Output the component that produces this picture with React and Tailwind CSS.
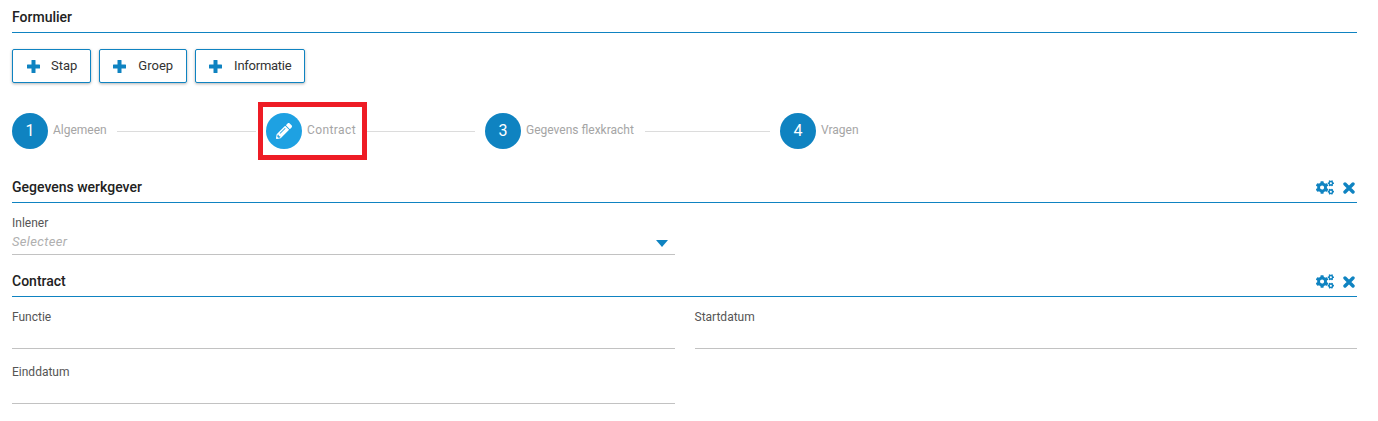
import React from "react";
import { FaPencilAlt, FaCogs } from "react-icons/fa";

const BLUE = "text-[#0f83c1]";

function PlusIcon({ className }) {
  return (
    <svg viewBox="0 0 13 13" className={className} fill="currentColor">
      <rect x="4.5" y="0" width="4" height="13" rx="0.6" />
      <rect x="0" y="4.5" width="13" height="4" rx="0.6" />
    </svg>
  );
}

function CloseIcon({ className }) {
  return (
    <svg viewBox="0 0 12 12" className={className} stroke="currentColor" strokeWidth="3.4" strokeLinecap="round">
      <path d="M2 2 L10 10 M10 2 L2 10" />
    </svg>
  );
}

function AddButton({ label, gap, pad, track = "" }) {
  return (
    <button className={`h-[34px] flex items-center ${pad} bg-white border border-[#0f83c1] rounded-[2px] shadow-[0_1px_3px_rgba(0,0,0,0.3)] text-[13px] text-[#333] ${track}`}>
      <PlusIcon className={`${BLUE} w-[13px] h-[13px] ${gap}`} />
      {label}
    </button>
  );
}

function Step({ n, label, icon, line, active, labelClass, lineGap = "ml-[10px]" }) {
  return (
    <div className="flex items-center">
      <div className={`relative w-9 h-9 rounded-full flex items-center justify-center text-white text-[16px] ${active ? "bg-[#1ea1e2]" : "bg-[#0f83c1]"}`}>
        {icon || n}
      </div>
      <span className={`ml-[5px] pb-[2px] text-[12px] text-[#a5a5a5] whitespace-nowrap ${labelClass}`}>{label}</span>
      {line ? <div className={`${lineGap} h-px bg-[#dcdcdc] ${line}`} /> : null}
    </div>
  );
}

function Section({ title, children }) {
  return (
    <section>
      <div className="h-[30px] flex items-center justify-between border-b border-[#0f83c1]">
        <h2 className="text-[14px] font-medium text-[#222]">{title}</h2>
        <div className="flex items-center gap-[9px] pr-[2px]">
          <FaCogs className={`${BLUE} w-[18px] h-[15px]`} />
          <CloseIcon className={`${BLUE} w-[12px] h-[12px]`} />
        </div>
      </div>
      {children}
    </section>
  );
}

function Field({ label, placeholder, select, className = "" }) {
  return (
    <div className={`relative h-[39px] border-b border-[#c2c2c2] ${className}`}>
      <div className="text-[12px] leading-[14px] text-[#555]">{label}</div>
      {placeholder ? (
        <div className="mt-[5px] text-[13px] leading-[14px] italic text-[#b0b0b0] tracking-[0.35px]">{placeholder}</div>
      ) : null}
      {select ? (
        <svg viewBox="0 0 12 7" className="absolute right-[7px] top-[24px] w-[12px] h-[7px] text-[#0f83c1]" fill="currentColor">
          <path d="M0 0 H12 L6 7 Z" />
        </svg>
      ) : null}
    </div>
  );
}

export default function App() {
  return (
    <div className="relative h-[421px] bg-white px-[12px] pr-[21px] font-['Roboto',sans-serif] overflow-hidden">
      <div className="pt-[10px] h-[33px] border-b border-[#0f83c1]">
        <h1 className="text-[14px] leading-[15px] font-medium text-[#222]">Formulier</h1>
      </div>

      <div className="flex gap-[8px] mt-[16px]">
        <AddButton label="Stap" gap="mr-[11px]" pad="pl-[14px] pr-[13px]" />
        <AddButton label="Groep" gap="mr-[12px]" pad="pl-[13px] pr-[13px]" />
        <AddButton label="Informatie" gap="mr-[12px]" pad="pl-[13px] pr-[13px]" track="tracking-[-0.25px]" />
      </div>

      <div className="relative flex items-center mt-[30px]">
        <Step n="1" label="Algemeen" line="w-[139px]" labelClass="w-[54px]" />
        <div className="ml-[10px]">
          <Step
            active
            label="Contract"
            line="w-[108px]"
            lineGap="ml-[11px]"
            labelClass="w-[49px] tracking-[0.4px]"
            icon={<FaPencilAlt className="w-[16px] h-[16px]" />}
          />
        </div>
        <div className="ml-[10px]">
          <Step n="3" label="Gegevens flexkracht" line="w-[125px]" labelClass="w-[109px]" />
        </div>
        <div className="ml-[10px]">
          <Step n="4" label="Vragen" labelClass="w-[38px]" />
        </div>
        <div className="absolute left-[246px] top-[-11px] w-[109px] h-[58px] border-[5px] border-[#ee1c25] pointer-events-none" />
      </div>

      <div className="mt-[24px]">
        <Section title="Gegevens werkgever">
          <div className="grid grid-cols-2 gap-x-[20px] mt-[13px]">
            <Field label="Inlener" placeholder="Selecteer" select />
          </div>
        </Section>
      </div>

      <div className="mt-[12px]">
        <Section title="Contract">
          <div className="grid grid-cols-2 gap-x-[20px] gap-y-[16px] mt-[13px]">
            <Field label="Functie" />
            <Field label="Startdatum" />
            <Field label="Einddatum" />
          </div>
        </Section>
      </div>
    </div>
  );
}
